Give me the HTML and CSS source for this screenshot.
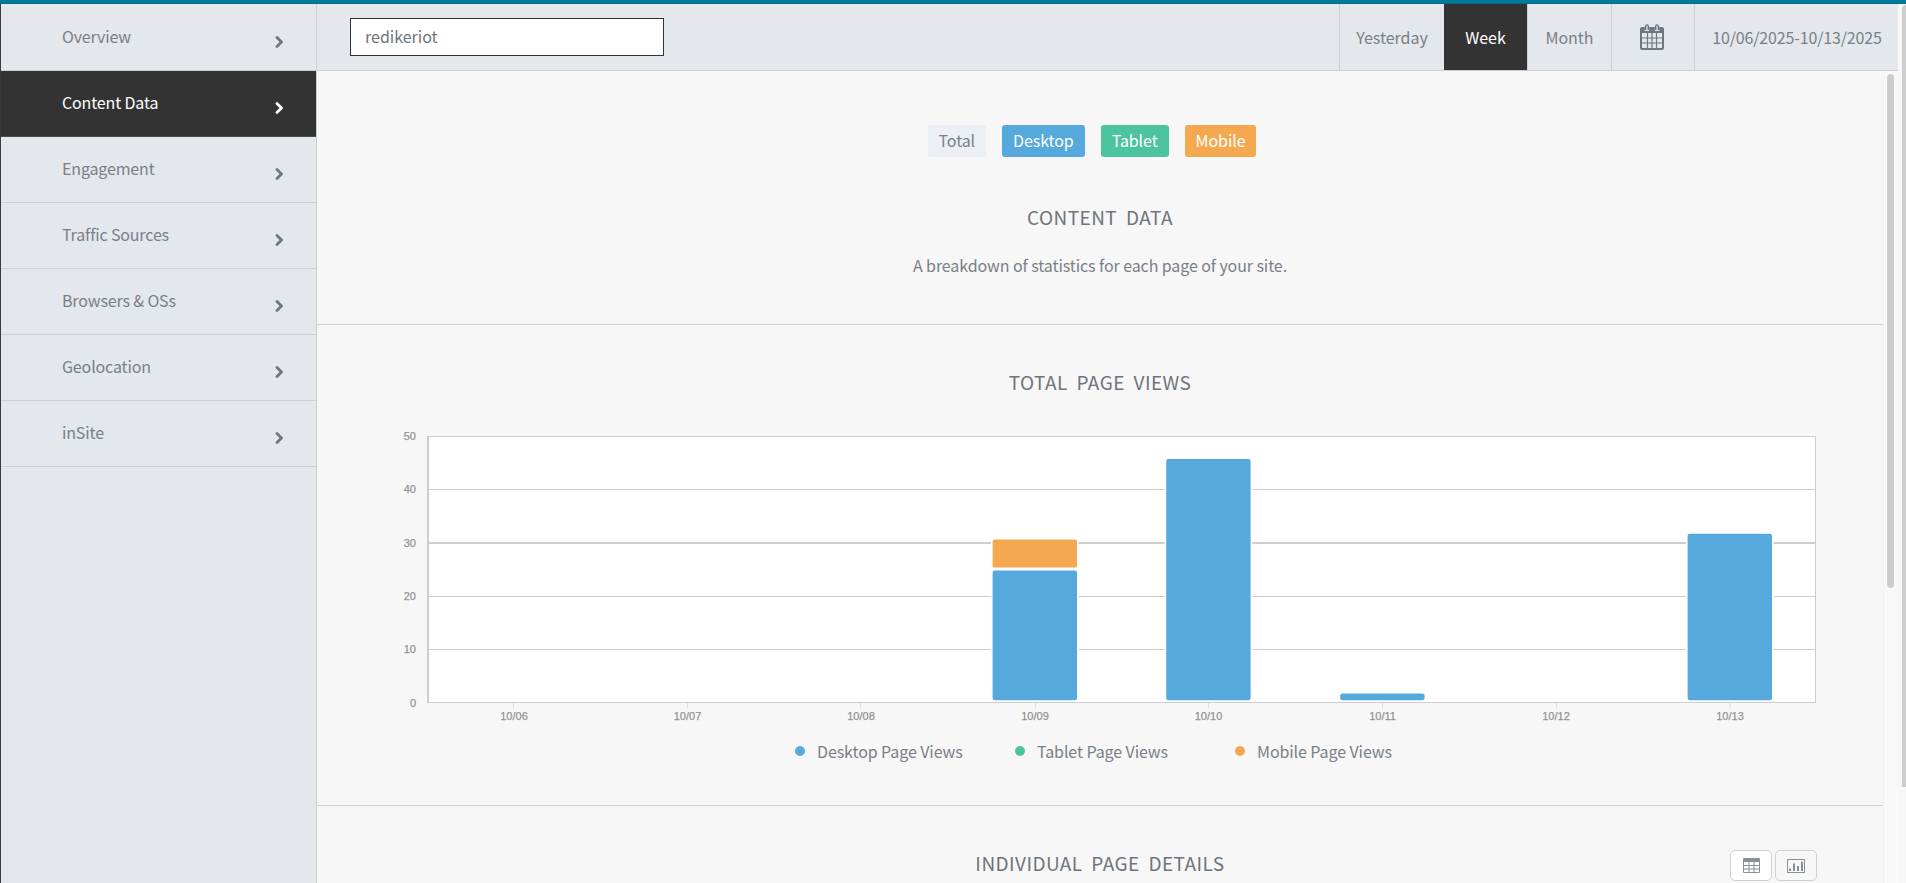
FILE: index.html
```html
<!DOCTYPE html>
<html lang="en">
<head>
<meta charset="utf-8">
<title>Content Data</title>
<link rel="stylesheet" href="styles.css">
</head>
<body>
<div class="topbar"></div>
<div class="shell">
  <nav class="sidebar">
    <a class="nav-item"><span>Overview</span><svg class="chev" viewBox="0 0 9 12"><path d="M2 1.5 6.5 6 2 10.5"/></svg></a>
    <a class="nav-item active"><span>Content Data</span><svg class="chev" viewBox="0 0 9 12"><path d="M2 1.5 6.5 6 2 10.5"/></svg></a>
    <a class="nav-item"><span>Engagement</span><svg class="chev" viewBox="0 0 9 12"><path d="M2 1.5 6.5 6 2 10.5"/></svg></a>
    <a class="nav-item"><span>Traffic Sources</span><svg class="chev" viewBox="0 0 9 12"><path d="M2 1.5 6.5 6 2 10.5"/></svg></a>
    <a class="nav-item"><span>Browsers &amp; OSs</span><svg class="chev" viewBox="0 0 9 12"><path d="M2 1.5 6.5 6 2 10.5"/></svg></a>
    <a class="nav-item"><span>Geolocation</span><svg class="chev" viewBox="0 0 9 12"><path d="M2 1.5 6.5 6 2 10.5"/></svg></a>
    <a class="nav-item"><span>inSite</span><svg class="chev" viewBox="0 0 9 12"><path d="M2 1.5 6.5 6 2 10.5"/></svg></a>
  </nav>
  <div class="panel">
    <header class="header">
      <div class="search"><input class="search-input" type="text" value="redikeriot"></div>
      <div class="cell cell-yesterday">Yesterday</div>
      <div class="cell cell-week">Week</div>
      <div class="cell cell-month">Month</div>
      <div class="cell cell-cal">
        <svg class="cal-icon" viewBox="0 0 24 26">
          <path class="cal-body" d="M2 3h2.800v4h4.400V3h5.600v4h4.400V3H22a2 2 0 0 1 2 2v19a2 2 0 0 1-2 2H2a2 2 0 0 1-2-2V5a2 2 0 0 1 2-2zM2 9v15h20V9z"/>
          <path class="cal-grid" d="M2 14h20M2 19h20M7.500 9v15M12 9v15M16.500 9v15"/>
          <path class="cal-ring" d="M5.700 6V2.200a1.300 1.300 0 0 1 2.600 0V6M15.700 6V2.200a1.300 1.300 0 0 1 2.600 0V6"/>
        </svg>
      </div>
      <div class="cell cell-date">10/06/2025-10/13/2025</div>
    </header>
    <div class="main">
      <div class="content">
        <section class="hero">
          <div class="badges">
            <span class="badge badge-total">Total</span><span class="badge badge-desktop">Desktop</span><span class="badge badge-tablet">Tablet</span><span class="badge badge-mobile">Mobile</span>
          </div>
          <h2 class="title title-hero">Content Data</h2>
          <p class="subtitle">A breakdown of statistics for each page of your site.</p>
        </section>
        <section class="chart-section">
          <h2 class="title title-chart">Total Page Views</h2>
          <svg class="chart" viewBox="317 425 1566 305">
            <rect class="plot" x="427" y="436" width="1389" height="267"/>
            <path class="grid" d="M427 436.500H1816M427 489.500H1816M427 596.500H1816M427 649.500H1816M427 702.500H1816M1815.500 436V703"/>
            <path class="grid-thick" d="M427 543H1816M428 436V703"/>
            <path class="tick" d="M513.500 703v5M687.500 703v5M860.500 703v5M1035.500 703v5M1208.500 703v5M1382.500 703v5M1556.500 703v5M1730 703v5"/>
            <rect class="bar bar-desktop" x="991.800" y="569.600" width="86" height="131.400" rx="3"/>
            <rect class="bar bar-mobile" x="991.800" y="538.600" width="86" height="29.800" rx="3"/>
            <rect class="bar bar-desktop" x="1165.400" y="458.200" width="86" height="242.800" rx="3"/>
            <rect class="bar bar-desktop" x="1339.400" y="692.600" width="86" height="8.400" rx="3"/>
            <rect class="bar bar-desktop" x="1686.800" y="533" width="86" height="168" rx="3"/>
            <g class="y-labels">
              <text x="416" y="440">50</text><text x="416" y="493">40</text><text x="416" y="547">30</text>
              <text x="416" y="600">20</text><text x="416" y="653">10</text><text x="416" y="707">0</text>
            </g>
            <g class="x-labels">
              <text x="514" y="720">10/06</text><text x="687.500" y="720">10/07</text><text x="861" y="720">10/08</text>
              <text x="1035" y="720">10/09</text><text x="1208.500" y="720">10/10</text><text x="1382.500" y="720">10/11</text>
              <text x="1556" y="720">10/12</text><text x="1730" y="720">10/13</text>
            </g>
          </svg>
          <div class="legend">
            <span class="legend-item"><i class="dot dot-desktop"></i>Desktop Page Views</span>
            <span class="legend-item"><i class="dot dot-tablet"></i>Tablet Page Views</span>
            <span class="legend-item"><i class="dot dot-mobile"></i>Mobile Page Views</span>
          </div>
        </section>
        <section class="details">
          <h2 class="title title-details">Individual Page Details</h2>
          <div class="view-btns">
            <button class="view-btn view-btn-on" aria-label="Table">
              <svg class="tbl-icon" viewBox="0 0 17 15">
                <path class="tbl-head" d="M1 0h15a1 1 0 0 1 1 1v3H0V1a1 1 0 0 1 1-1z"/>
                <path class="tbl-line" d="M.5 4v10.500h16V4M0 7.500h17M0 11h17M6 4v11M11 4v11"/>
              </svg>
            </button>
            <button class="view-btn" aria-label="Chart">
              <svg class="bar-icon" viewBox="0 0 18 14">
                <rect class="bar-frame" x=".5" y=".5" width="17" height="13"/>
                <path class="bar-marks" d="M3 12V9.500M7 12V4.500M11 12V7M15 12V2.500"/>
              </svg>
            </button>
          </div>
        </section>
      </div>
      <div class="rail"><div class="rail-thumb"></div></div>
    </div>
  </div>
  <div class="outer-rail"><div class="outer-thumb"></div></div>
</div>
</body>
</html>
```

FILE: styles.css
```css
* { box-sizing: border-box; }
html, body { height: 100%; }
body {
  margin: 0;
  height: 883px;
  overflow: hidden;
  background: #f7f7f7;
  color: #7a7f87;
  font-family: "Noto Sans CJK SC", "Noto Sans", sans-serif;
  font-size: 16px;
  line-height: 24px;
  letter-spacing: -.09px;
  display: flex;
  flex-direction: column;
}
.topbar { height: 4px; flex: none; background: #007a9c; border-bottom: 1px solid #0b6a85; }
.shell { flex: 1; display: flex; min-height: 0; }

.sidebar {
  width: 317px;
  flex: none;
  padding-top: 1px;
  background: #e4e7ec;
  border-left: 1px solid #3a3a3a;
  border-right: 1px solid #ccd0d5;
}
.nav-item {
  height: 66px;
  padding: 0 32px 0 61px;
  display: flex;
  align-items: center;
  justify-content: space-between;
  border-bottom: 1px solid #ccd0d5;
  color: #7a7f87;
  letter-spacing: -.15px;
}
.nav-item span { margin-bottom: 4px; }
.nav-item.active { background: #333; color: #fff; border-bottom-color: #4b4c50; }
.chev { width: 9px; height: 12px; margin-top: 8px; }
.chev path { fill: none; stroke: #6f7680; stroke-width: 2.800; stroke-linejoin: round; stroke-linecap: round; }
.active .chev path { stroke: #fff; }

.panel { flex: 1; min-width: 0; display: flex; flex-direction: column; }
.header {
  height: 67px;
  flex: none;
  display: flex;
  background: #e4e7ec;
  border-bottom: 1px solid #ccd0d5;
}
.search { flex: 1; padding: 14px 0 0 33px; }
.search-input {
  display: block;
  width: 314px;
  height: 38px;
  padding: 0 11px 2px 14px;
  border: 1px solid #333;
  border-radius: 0;
  background: #fff;
  color: #6f747c;
  font: inherit;
  outline: none;
}
.cell {
  display: flex;
  align-items: center;
  justify-content: center;
  border-left: 1px solid #ccd0d5;
  letter-spacing: 0;
}
.cell-yesterday { width: 105px; }
.cell-week { width: 83px; background: #333; color: #fff; border-left: 0; }
.cell-month { width: 84px; }
.cell-cal { width: 83px; padding-right: 2px; }
.cell-date { width: 204px; padding-left: 1px; letter-spacing: -.15px; }
.cal-icon { width: 24px; height: 26px; overflow: visible; }
.cal-body { fill: #6f7680; fill-rule: evenodd; }
.cal-grid { fill: none; stroke: #6f7680; stroke-width: 1.200; }
.cal-ring { fill: none; stroke: #6f7680; stroke-width: 1.400; }

.main { flex: 1; min-height: 0; display: flex; }
.content { flex: 1; min-width: 0; overflow: hidden; }
.rail {
  width: 15px;
  flex: none;
  padding: 3px 4px 0 3px;
  background: #f9f9f9;
  border-left: 1px solid #efefef;
  border-top-left-radius: 6px;
}
.rail-thumb { height: 514px; background: #cdcdcd; border-radius: 4px; }
.outer-rail { width: 8px; flex: none; padding: 1px 0 0 4px; }
.outer-thumb { height: 782px; background: #cdcdcd; border-radius: 4px 0 0 0; }

.hero {
  height: 254px;
  padding-top: 54px;
  text-align: center;
  border-bottom: 1px solid #ccd0d5;
}
.badges { display: flex; justify-content: center; }
.badge {
  height: 32px;
  margin-right: 16px;
  padding: 0 11px;
  border-radius: 3px;
  line-height: 30px;
  color: #fff;
}
.badge-total { background: #eceff4; color: #7a7f87; }
.badge-desktop { background: #55a9dc; }
.badge-tablet { background: #4dc4a0; }
.badge-mobile { background: #f4a950; }

.title {
  margin: 0;
  font-size: 19px;
  font-weight: 400;
  line-height: 26px;
  text-align: center;
  text-transform: uppercase;
  letter-spacing: .45px;
  word-spacing: 4px;
  color: #6f747c;
}
.title-hero { margin-top: 47px; }
.subtitle { margin: 23px 0 0; }

.chart-section { height: 481px; padding-top: 44px; border-bottom: 1px solid #ccd0d5; }
.chart { display: block; width: 1566px; height: 305px; margin-top: 30px; }
.plot { fill: #fff; }
.grid { fill: none; stroke: #ccccd2; stroke-width: 1; }
.grid-thick { fill: none; stroke: #ccccd2; stroke-width: 2; }
.tick { fill: none; stroke: #dcdcdc; stroke-width: 1; }
.bar { stroke: #fff; stroke-width: 1.600; }
.bar-desktop { fill: #55a9dc; }
.bar-mobile { fill: #f4a950; }
.y-labels text, .x-labels text {
  font-family: "Liberation Sans", Arial, sans-serif;
  font-size: 11px;
  letter-spacing: 0;
  fill: #8f8f8f;
  stroke: #999;
  stroke-width: .25px;
}
.y-labels text { text-anchor: end; }
.x-labels text { text-anchor: middle; }

.legend { display: flex; justify-content: center; padding-left: 50px; margin-top: 9px; }
.legend-item { display: flex; align-items: center; width: 220px; }
.dot { width: 10px; height: 10px; border-radius: 50%; margin-right: 12px; }
.dot-desktop { background: #55a9dc; }
.dot-tablet { background: #4dc4a0; }
.dot-mobile { background: #f4a950; }

.details { display: flex; justify-content: center; position: relative; padding-top: 44px; }
.title-details { flex: 1; }
.view-btns { position: absolute; right: 66px; top: 44px; display: flex; gap: 3px; }
.view-btn {
  width: 42px;
  height: 31px;
  padding: 0;
  display: flex;
  align-items: center;
  justify-content: center;
  background: #f7f7f7;
  border: 1px solid #ccd0d5;
  border-radius: 5px;
}
.view-btn-on { background: #fff; }
.tbl-icon { width: 17px; height: 15px; }
.tbl-head { fill: #8a8f97; }
.tbl-line { fill: none; stroke: #8a8f97; stroke-width: 1; }
.bar-icon { width: 18px; height: 14px; }
.bar-frame { fill: none; stroke: #8a8f97; stroke-width: 1; }
.bar-marks { fill: none; stroke: #8a8f97; stroke-width: 2; }
```
